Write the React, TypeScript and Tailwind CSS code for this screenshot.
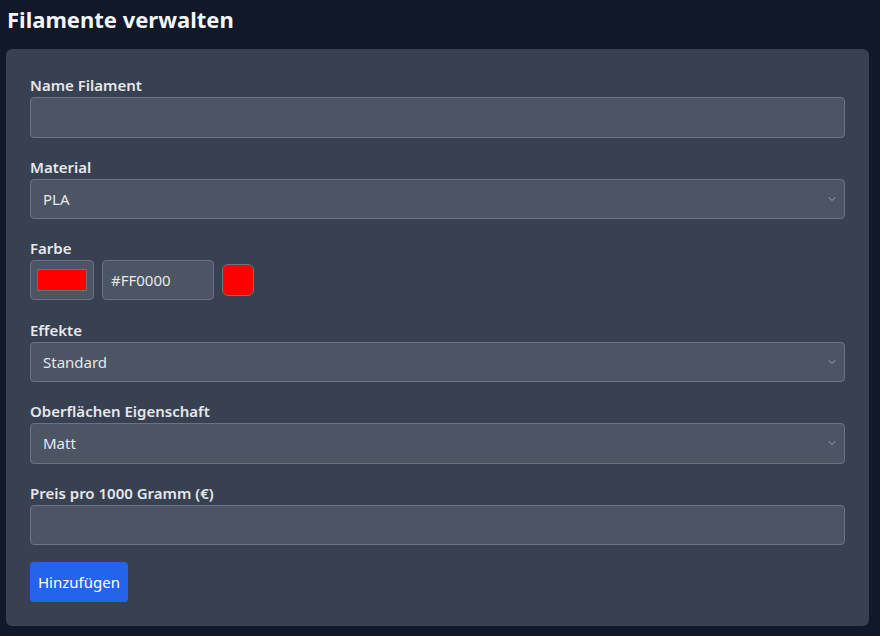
import { ChevronDown } from 'lucide-react';

const font = { fontFamily: '"Noto Sans", "Open Sans", sans-serif' };

const Label = ({ children }: { children: React.ReactNode }) => (
  <label className="block text-[15px] font-semibold leading-6 text-[#e5e7eb]">{children}</label>
);

const Select = ({ value }: { value: string }) => (
  <div className="relative h-[40.5px] rounded border border-[#6b7280] bg-[#4b5563] flex items-center px-3 text-[15px] text-[#e5e7eb]">
    <span>{value}</span>
    <ChevronDown className="absolute right-[6px] top-1/2 -translate-y-1/2 w-3 h-3 text-[#9ca3af]" strokeWidth={2} />
  </div>
);

const TextInput = () => <div className="h-[40.5px] rounded border border-[#6b7280] bg-[#4b5563]" />;

export default function App() {
  return (
    <div className="min-h-screen bg-[#111827] px-[6px] pt-[3px]" style={font}>
      <h1 className="text-[22px] font-bold text-[#f3f4f6] leading-8 pl-px">Filamente verwalten</h1>
      <div className="mt-[14px] w-[863px] rounded-md bg-[#374151] px-6 pt-6 pb-[24px]">
        <div>
          <Label>Name Filament</Label>
          <TextInput />
        </div>
        <div className="mt-[17px]">
          <Label>Material</Label>
          <Select value="PLA" />
        </div>
        <div className="mt-[17px]">
          <Label>Farbe</Label>
          <div className="flex items-center gap-2 h-[40.5px]">
            <div className="w-[64px] h-[40px] rounded border border-[#6b7280] bg-[#4b5563] flex items-center justify-center">
              <div className="w-[50px] h-[22px] bg-[#ff0000] border border-[#6b7280]" />
            </div>
            <div className="w-[112px] h-[40px] rounded border border-[#6b7280] bg-[#4b5563] flex items-center px-2 text-[15px] text-[#e5e7eb]">
              #FF0000
            </div>
            <div className="w-[32px] h-[32px] rounded-md bg-[#ff0000] border border-[#6b7280]" />
          </div>
        </div>
        <div className="mt-[17px]">
          <Label>Effekte</Label>
          <Select value="Standard" />
        </div>
        <div className="mt-[17px]">
          <Label>Oberflächen Eigenschaft</Label>
          <Select value="Matt" />
        </div>
        <div className="mt-[17px]">
          <Label>Preis pro 1000 Gramm (€)</Label>
          <TextInput />
        </div>
        <button className="mt-[17px] h-[40px] px-2 rounded bg-[#2563eb] text-white text-[15px]">Hinzufügen</button>
      </div>
    </div>
  );
}
